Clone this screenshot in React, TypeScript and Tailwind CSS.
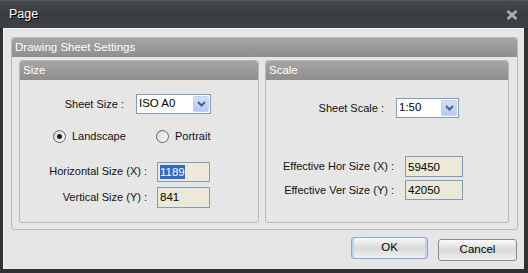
import React from 'react'

const font = { fontFamily: '"Liberation Sans", Arial, sans-serif' }

function Chevron() {
  return (
    <svg width="9" height="6" viewBox="0 0 9 6">
      <path d="M1 1 L4.5 4.5 L8 1" fill="none" stroke="#4d6185" strokeWidth="2" />
    </svg>
  )
}

function Select({ value, width }: { value: string; width: string }) {
  return (
    <div className={`${width} h-[20px] bg-white border border-[#7f9db9] flex items-center justify-between pl-[2px] pr-[1px]`}>
      <span className="text-[11.5px] text-black leading-none">{value}</span>
      <div className="w-[16px] h-[16px] rounded-[2px] bg-gradient-to-b from-[#d3e0fa] to-[#b5cbf5] border border-[#c3d3f3] flex items-center justify-center">
        <Chevron />
      </div>
    </div>
  )
}

function Field({ value, width, height, selected }: { value: string; width: string; height: string; selected?: boolean }) {
  return (
    <div className={`${width} ${height} bg-[#ece9d8] border border-[#7f9db9] flex items-center pl-[2px]`}>
      {selected ? (
        <span className="bg-[#316ac5] text-white text-[11.5px] leading-[14px]">{value}</span>
      ) : (
        <span className="text-black text-[11.5px] leading-[14px]">{value}</span>
      )}
    </div>
  )
}

function Radio({ checked }: { checked?: boolean }) {
  return (
    <div className="w-[13px] h-[13px] rounded-full border border-[#5a6470] bg-gradient-to-br from-[#d4d4d4] to-[#ffffff] flex items-center justify-center">
      {checked && <div className="w-[5px] h-[5px] rounded-full bg-[#1e1e1e]" />}
    </div>
  )
}

function GroupHeader({ title }: { title: string }) {
  return (
    <div className="h-[19px] rounded-t-[3px] bg-gradient-to-b from-[#a6a6a6] to-[#8e8e8e] text-white text-[11.5px] flex items-center pl-[3px]">
      {title}
    </div>
  )
}

export default function App() {
  return (
    <div className="w-[528px] h-[273px] bg-[#2f3135] flex flex-col text-[11px] text-[#111]" style={font}>
      {/* title bar */}
      <div className="h-[28px] border-t border-[#55585d] bg-gradient-to-b from-[#44474c] via-[#3a3c41] to-[#3e4146] flex items-center justify-between pl-[9px] pr-[10px] shrink-0">
        <span className="text-white text-[12.5px] [text-shadow:1px_1px_0_#000]">Page</span>
        <svg width="12" height="10" viewBox="0 0 12 10">
          <path d="M1.5 1 L10.5 9 M10.5 1 L1.5 9" stroke="#a9b0b8" strokeWidth="2.6" />
        </svg>
      </div>

      {/* body */}
      <div className="ml-[3px] mr-[4px] h-[241px] bg-[#e6e6e6] border-l border-t border-[#f4f4f4] flex flex-col">
        {/* outer group */}
        <div className="ml-[7px] mt-[8px] w-[507px] h-[193px] rounded-[3px] border border-[#b8b8b8] flex flex-col">
          <GroupHeader title="Drawing Sheet Settings" />
          <div className="flex gap-[6px] pl-[7px] pt-[3px]">
            {/* Size group */}
            <div className="w-[240px] h-[163px] rounded-[3px] border border-[#b8b8b8] flex flex-col">
              <GroupHeader title="Size" />
              <div className="flex items-center mt-[14px]">
                <div className="w-[104px] text-right">Sheet Size :</div>
                <div className="ml-[12px]">
                  <Select value="ISO A0" width="w-[75px]" />
                </div>
              </div>
              <div className="flex items-center mt-[14px] ml-[33px]">
                <div className="w-[103px] flex items-center gap-[6px]">
                  <Radio checked />
                  <span>Landscape</span>
                </div>
                <div className="flex items-center gap-[6px]">
                  <Radio />
                  <span>Portrait</span>
                </div>
              </div>
              <div className="flex items-center mt-[17px]">
                <div className="w-[127px] text-right">Horizontal Size (X) :</div>
                <div className="ml-[10px]">
                  <Field value="1189" width="w-[53px]" height="h-[20px]" selected />
                </div>
              </div>
              <div className="flex items-center mt-[5px]">
                <div className="w-[127px] text-right">Vertical Size (Y) :</div>
                <div className="ml-[10px]">
                  <Field value="841" width="w-[53px]" height="h-[21px]" />
                </div>
              </div>
            </div>

            {/* Scale group */}
            <div className="w-[244px] h-[163px] rounded-[3px] border border-[#b8b8b8] flex flex-col">
              <GroupHeader title="Scale" />
              <div className="flex items-center mt-[18px]">
                <div className="w-[118px] text-right">Sheet Scale :</div>
                <div className="ml-[12px]">
                  <Select value="1:50" width="w-[63px]" />
                </div>
              </div>
              <div className="flex items-center mt-[38px]">
                <div className="w-[128px] text-right">Effective Hor Size (X) :</div>
                <div className="ml-[11px]">
                  <Field value="59450" width="w-[58px]" height="h-[21px]" />
                </div>
              </div>
              <div className="flex items-center mt-[3px]">
                <div className="w-[128px] text-right">Effective Ver Size (Y) :</div>
                <div className="ml-[11px]">
                  <Field value="42050" width="w-[58px]" height="h-[20px]" />
                </div>
              </div>
            </div>
          </div>
        </div>

        {/* buttons */}
        <div className="flex items-start mt-[7px] ml-[347px] gap-[10px]">
          <button className="w-[77px] h-[22px] rounded-[3px] border border-[#8ca9d6] bg-gradient-to-b from-[#fbfbfb] via-[#d9d9d9] to-[#f0f0f0] shadow-[inset_2px_0_0_#bcd2f2,inset_-2px_0_0_#bcd2f2] text-[11.5px] text-black">
            OK
          </button>
          <button className="mt-[2px] w-[79px] h-[22px] rounded-[3px] border border-[#8a8a8a] bg-gradient-to-b from-[#fbfbfb] via-[#d9d9d9] to-[#f0f0f0] text-[11.5px] text-black">
            Cancel
          </button>
        </div>
      </div>
    </div>
  )
}
